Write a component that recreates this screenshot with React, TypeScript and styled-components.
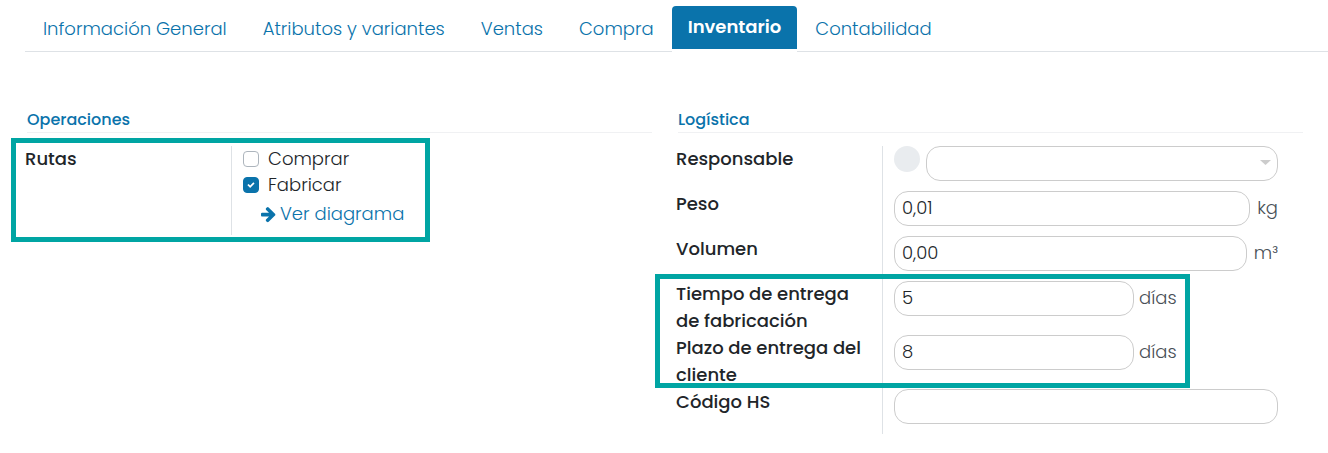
import React from "react";
import styled, { createGlobalStyle } from "styled-components";

const blue = "#0a73ab";
const line = "#dee2e6";
const teal = "#00a5a3";

const GlobalStyle = createGlobalStyle`
  *, *::before, *::after { box-sizing: border-box; }
  body {
    margin: 0;
    background: #fff;
    color: #212529;
    font-family: Poppins, Inter, "Liberation Sans", sans-serif;
    font-size: 18px;
    font-weight: 300;
    line-height: 27px;
  }
`;

const Page = styled.main`
  padding-top: 6px;
`;

const Tabs = styled.nav`
  display: flex;
  align-items: flex-start;
  margin-left: 25px;
  height: 46px;
  border-bottom: 1px solid ${line};
`;

const Tab = styled.a<{ $active?: boolean }>`
  display: flex;
  align-items: center;
  height: ${(p) => (p.$active ? 43 : 46)}px;
  padding: 0 ${(p) => (p.$active ? 16 : 18)}px 2px;
  border-radius: 4px 4px 0 0;
  background: ${(p) => (p.$active ? blue : "transparent")};
  box-shadow: ${(p) => (p.$active ? "0 3px 0 #fff" : "none")};
  color: ${(p) => (p.$active ? "#fff" : blue)};
  font-weight: ${(p) => (p.$active ? 600 : 300)};
  text-decoration: none;
  white-space: nowrap;
`;

const Groups = styled.div`
  display: grid;
  grid-template-columns: repeat(2, minmax(0, 1fr));
  column-gap: 24px;
  align-items: start;
  padding: 56px 25px 19px;
`;

const Group = styled.section``;

const GroupTitle = styled.h2`
  margin: 0 0 13px 2px;
  border-bottom: 1px solid #f0f1f3;
  color: ${blue};
  font-size: 16px;
  font-weight: 500;
  line-height: 24px;
`;

const Highlighted = styled.div`
  position: relative;
`;

const Highlight = styled.div<{ $top: number; $left: number; $bottom: number; $width: number }>`
  position: absolute;
  top: ${(p) => p.$top}px;
  left: ${(p) => p.$left}px;
  bottom: ${(p) => p.$bottom}px;
  width: ${(p) => p.$width}px;
  border: 5px solid ${teal};
  pointer-events: none;
`;

const Row = styled.div`
  display: grid;
  grid-template-columns: 206px minmax(0, 1fr);
`;

const Label = styled.label`
  margin-top: -1px;
  padding-right: 12px;
  font-weight: 500;
`;

const Value = styled.div<{ $tall?: boolean }>`
  display: flex;
  align-items: flex-start;
  min-height: ${(p) => (p.$tall ? 54 : 45)}px;
  padding: 0 25px 10px 11px;
  border-left: 1px solid ${line};
`;

const Routes = styled.div`
  padding-left: 11px;
  border-left: 1px solid ${line};
`;

const Route = styled.label`
  display: flex;
  gap: 9px;
  height: 26px;
  line-height: 25px;
`;

const CheckHolder = styled.span`
  position: relative;
  display: flex;
  height: 16px;
  margin-top: 5px;

  svg {
    position: absolute;
    top: 4px;
    left: 4px;
    pointer-events: none;
  }
`;

const CheckBox = styled.input`
  appearance: none;
  width: 16px;
  height: 16px;
  margin: 0;
  border: 1px solid #adb5bd;
  border-radius: 4px;
  background: #fff;

  &:checked {
    border-color: ${blue};
    background: ${blue};
  }
`;

const DiagramLink = styled.a`
  display: flex;
  align-items: center;
  gap: 4px;
  padding: 2px 0 8px 18px;
  color: ${blue};
  text-decoration: none;
`;

const Avatar = styled.span`
  flex: none;
  width: 26px;
  height: 26px;
  margin-right: 6px;
  border-radius: 50%;
  background: #e9ecef;
`;

const TextInput = styled.input<{ $short?: boolean }>`
  flex: ${(p) => (p.$short ? "0 1 240px" : "1 1 0")};
  min-width: 0;
  height: 35px;
  padding: 0 7px 2px;
  border: 1px solid #ccc;
  border-radius: 14px;
  background: #fff;
  color: inherit;
  font: inherit;
`;

const SelectHolder = styled.span`
  position: relative;
  display: flex;
  flex: 1;

  svg {
    position: absolute;
    top: 14px;
    right: 7px;
    pointer-events: none;
  }
`;

const Select = styled.select`
  appearance: none;
  width: 100%;
  height: 35px;
  padding: 0 24px 0 7px;
  border: 1px solid #ccc;
  border-radius: 14px;
  background: #fff;
  color: inherit;
  font: inherit;
`;

const Unit = styled.span<{ $gap: number }>`
  margin-left: ${(p) => p.$gap}px;
  color: #495057;
  line-height: 33px;
`;

const tabs = [
  "Información General",
  "Atributos y variantes",
  "Ventas",
  "Compra",
  "Inventario",
  "Contabilidad",
];

interface FieldProps {
  id: string;
  label: string;
  value?: string;
  unit?: string;
  short?: boolean;
}

function ArrowIcon() {
  return (
    <svg width="15" height="18" viewBox="0 0 1536 1792" fill="currentColor" aria-hidden="true">
      <path d="M1472 960q0 54-37 91l-651 651q-39 37-91 37-51 0-90-37l-75-75q-38-38-38-91t38-91l293-293h-704q-52 0-84.500-37.500t-32.500-90.500v-128q0-53 32.500-90.500t84.500-37.500h704l-293-294q-38-36-38-90t38-90l75-75q38-38 90-38 53 0 91 38l651 651q37 35 37 90z" />
    </svg>
  );
}

function CheckIcon() {
  return (
    <svg width="8" height="8" viewBox="0 0 1792 1792" fill="#fff" aria-hidden="true">
      <path d="M1671 566q0 40-28 68l-724 724-136 136q-28 28-68 28t-68-28l-136-136-362-362q-28-28-28-68t28-68l136-136q28-28 68-28t68 28l294 295 656-657q28-28 68-28t68 28l136 136q28 28 28 68z" />
    </svg>
  );
}

function Field({ id, label, value = "", unit, short }: FieldProps) {
  return (
    <Row>
      <Label htmlFor={id}>{label}</Label>
      <Value $tall={short}>
        <TextInput id={id} type="text" defaultValue={value} $short={short} />
        {unit && <Unit $gap={short ? 5 : 7}>{unit}</Unit>}
      </Value>
    </Row>
  );
}

function RouteOption({ name, checked }: { name: string; checked?: boolean }) {
  return (
    <Route>
      <CheckHolder>
        <CheckBox type="checkbox" defaultChecked={checked} />
        {checked && <CheckIcon />}
      </CheckHolder>
      {name}
    </Route>
  );
}

export default function App() {
  return (
    <>
      <GlobalStyle />
      <Page>
        <Tabs>
          {tabs.map((name) => (
            <Tab key={name} href="#" $active={name === "Inventario"}>
              {name}
            </Tab>
          ))}
        </Tabs>
        <Groups>
          <Group>
            <GroupTitle>Operaciones</GroupTitle>
            <Highlighted>
              <Row>
                <Label as="span" id="rutas">
                  Rutas
                </Label>
                <Routes role="group" aria-labelledby="rutas">
                  <RouteOption name="Comprar" />
                  <RouteOption name="Fabricar" checked />
                  <DiagramLink href="#">
                    <ArrowIcon />
                    Ver diagrama
                  </DiagramLink>
                </Routes>
              </Row>
              <Highlight $top={-8} $left={-14} $bottom={-7} $width={419} />
            </Highlighted>
          </Group>
          <Group>
            <GroupTitle>Logística</GroupTitle>
            <Row>
              <Label htmlFor="responsable">Responsable</Label>
              <Value>
                <Avatar />
                <SelectHolder>
                  <Select id="responsable" />
                  <svg width="11" height="5" viewBox="0 0 11 5" aria-hidden="true">
                    <path d="M0 0h11L5.500 5z" fill="#ccc" />
                  </svg>
                </SelectHolder>
              </Value>
            </Row>
            <Field id="peso" label="Peso" value="0,01" unit="kg" />
            <Field id="volumen" label="Volumen" value="0,00" unit="m³" />
            <Highlighted>
              <Field
                id="fabricacion"
                label="Tiempo de entrega de fabricación"
                value="5"
                unit="días"
                short
              />
              <Field
                id="cliente"
                label="Plazo de entrega del cliente"
                value="8"
                unit="días"
                short
              />
              <Highlight $top={-7} $left={-21} $bottom={1} $width={535} />
            </Highlighted>
            <Field id="codigo" label="Código HS" />
          </Group>
        </Groups>
      </Page>
    </>
  );
}
